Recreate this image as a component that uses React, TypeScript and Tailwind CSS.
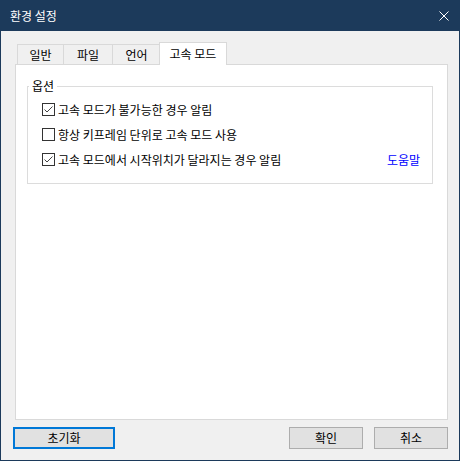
import React from "react";

const FONT = { fontFamily: "'Noto Sans CJK KR', 'Noto Sans', sans-serif" };

function CheckBox({ checked }: { checked: boolean }) {
  return (
    <svg width="13" height="13" viewBox="0 0 13 13" className="shrink-0">
      <rect x="0.5" y="0.5" width="12" height="12" fill="#fff" stroke="#333" />
      {checked && <path d="M2.5 6.5 L5 9 L10.5 3.5" fill="none" stroke="#444" strokeWidth="1" />}
    </svg>
  );
}

const options = [
  { label: "고속 모드가 불가능한 경우 알림", checked: true, help: false },
  { label: "항상 키프레임 단위로 고속 모드 사용", checked: false, help: false },
  { label: "고속 모드에서 시작위치가 달라지는 경우 알림", checked: true, help: true },
];

export default function App() {
  return (
    <div className="w-[460px] h-[461px] bg-[#1c3a5b] flex flex-col text-[12px] text-black" style={FONT}>
      {/* Title bar */}
      <div className="h-[31px] flex items-center justify-between pl-[10px] pr-[11px] text-white shrink-0">
        <span className="leading-[14px]">환경 설정</span>
        <svg width="10" height="10" viewBox="0 0 10 10">
          <path d="M0.5 0.5 L9.5 9.5 M9.5 0.5 L0.5 9.5" stroke="#fff" strokeWidth="1" />
        </svg>
      </div>

      {/* Body */}
      <div className="flex-1 mx-[1px] mb-[1px] bg-[#f0f0f0] flex flex-col pt-[11px]">
        <div className="pl-[14px]">
          {/* Tabs */}
          <div className="h-[22px] flex items-end pl-[2px]">
            <div className="w-[47px] h-[20px] border-t border-l border-r border-[#d9d9d9] flex items-center justify-center leading-[14px]">일반</div>
            <div className="-ml-[1px] w-[50px] h-[20px] border-t border-l border-r border-[#d9d9d9] flex items-center justify-center leading-[14px]">파일</div>
            <div className="-ml-[1px] w-[49px] h-[20px] border-t border-l border-r border-[#d9d9d9] flex items-center justify-center leading-[14px]">언어</div>
            <div className="-ml-[2px] -mb-[1px] relative z-10 w-[68px] h-[23px] bg-white border-t border-l border-r border-[#d9d9d9] flex items-center justify-center pb-[1px] leading-[14px]">
              고속 모드
            </div>
          </div>

          {/* Panel */}
          <div className="w-[433px] h-[356px] bg-white border border-[#d9d9d9] pl-[11px] pt-[13px]">
            <fieldset className="w-[406px] border border-[#dcdcdc] pt-[3px] pb-[11px]">
              <legend className="ml-[1px] px-[3px] leading-[16px]">옵션</legend>
              {options.map((o) => (
                <div key={o.label} className="h-[25px] flex items-center pl-[14px] pr-[12px]">
                  <CheckBox checked={o.checked} />
                  <span className="ml-[3px] leading-[14px]">{o.label}</span>
                  {o.help && <span className="ml-auto text-[#0000ff] leading-[14px]">도움말</span>}
                </div>
              ))}
            </fieldset>
          </div>
        </div>

        {/* Buttons */}
        <div className="mt-[7px] flex items-center pl-[12px] pr-[11px]">
          <button className="w-[102px] h-[22px] bg-[#e1e1e1] border-2 border-[#0078d7] leading-[14px]">초기화</button>
          <div className="flex-1" />
          <button className="w-[74px] h-[22px] bg-[#e1e1e1] border border-[#adadad] leading-[14px]">확인</button>
          <button className="ml-[11px] w-[74px] h-[22px] bg-[#e1e1e1] border border-[#adadad] leading-[14px]">취소</button>
        </div>
      </div>
    </div>
  );
}
